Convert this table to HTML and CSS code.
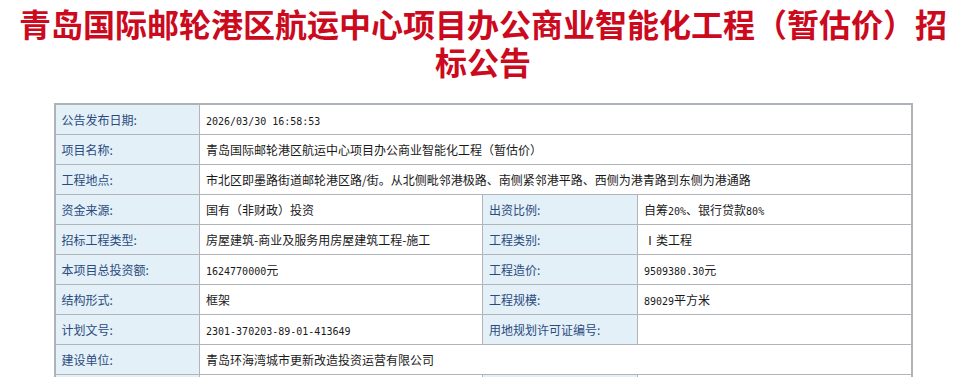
FILE: index.html
```html
<!DOCTYPE html>
<html lang="zh-CN">
<head>
<meta charset="utf-8">
<title>招标公告</title>
<link rel="stylesheet" href="styles.css">
</head>
<body>
<h1 class="title">青岛国际邮轮港区航运中心项目办公商业智能化工程（暂估价）招标公告</h1>
<table class="info">
  <colgroup>
    <col class="c1"><col class="c2"><col class="c3"><col class="c4">
  </colgroup>
  <tr><th>公告发布日期:</th><td colspan="3"><span class="d">2026/03/30 16:58:53</span></td></tr>
  <tr><th>项目名称:</th><td colspan="3">青岛国际邮轮港区航运中心项目办公商业智能化工程（暂估价）</td></tr>
  <tr><th>工程地点:</th><td colspan="3">市北区即墨路街道邮轮港区路/街。从北侧毗邻港极路、南侧紧邻港平路、西侧为港青路到东侧为港通路</td></tr>
  <tr><th>资金来源:</th><td>国有（非财政）投资</td><th>出资比例:</th><td>自筹<span class="d">20%</span>、银行贷款<span class="d">80%</span></td></tr>
  <tr><th>招标工程类型:</th><td>房屋建筑-商业及服务用房屋建筑工程-施工</td><th>工程类别:</th><td>Ⅰ类工程</td></tr>
  <tr><th>本项目总投资额:</th><td><span class="d">1624770000</span>元</td><th>工程造价:</th><td><span class="d">9509380.30</span>元</td></tr>
  <tr><th>结构形式:</th><td>框架</td><th>工程规模:</th><td><span class="d">89029</span>平方米</td></tr>
  <tr><th>计划文号:</th><td><span class="d">2301-370203-89-01-413649</span></td><th>用地规划许可证编号:</th><td></td></tr>
  <tr><th>建设单位:</th><td colspan="3">青岛环海湾城市更新改造投资运营有限公司</td></tr>
  <tr><th></th><td></td><th></th><td></td></tr>
</table>
</body>
</html>
```
FILE: styles.css
```css
html, body {
  margin: 0;
  padding: 0;
  background: #fff;
  font-family: "Noto Sans CJK SC", "Noto Sans", sans-serif;
}
body {
  padding: 4px 8px 0;
}
.title {
  margin: 0;
  font-size: 32px;
  line-height: 38px;
  font-weight: bold;
  color: #cc0a1e;
  text-align: center;
}
.info {
  margin: 23px auto 0;
  width: 859px;
  table-layout: fixed;
  border-collapse: collapse;
  border: 2px solid #aeb3b9;
  font-size: 12px;
}
.c1 { width: 145px; }
.c2 { width: 283px; }
.c3 { width: 155px; }
.c4 { width: auto; }
.info th, .info td {
  height: 29px;
  padding: 0 6px;
  border: 1px solid #b1b5ba;
  text-align: left;
  vertical-align: middle;
  white-space: nowrap;
  overflow: hidden;
}
.info th {
  background: #e3f0f7;
  color: #2b4b7e;
  font-weight: normal;
}
.info td {
  color: #1a1a1a;
}
.d {
  font-family: "DejaVu Sans Mono", monospace;
  font-size: 10px;
}
```
